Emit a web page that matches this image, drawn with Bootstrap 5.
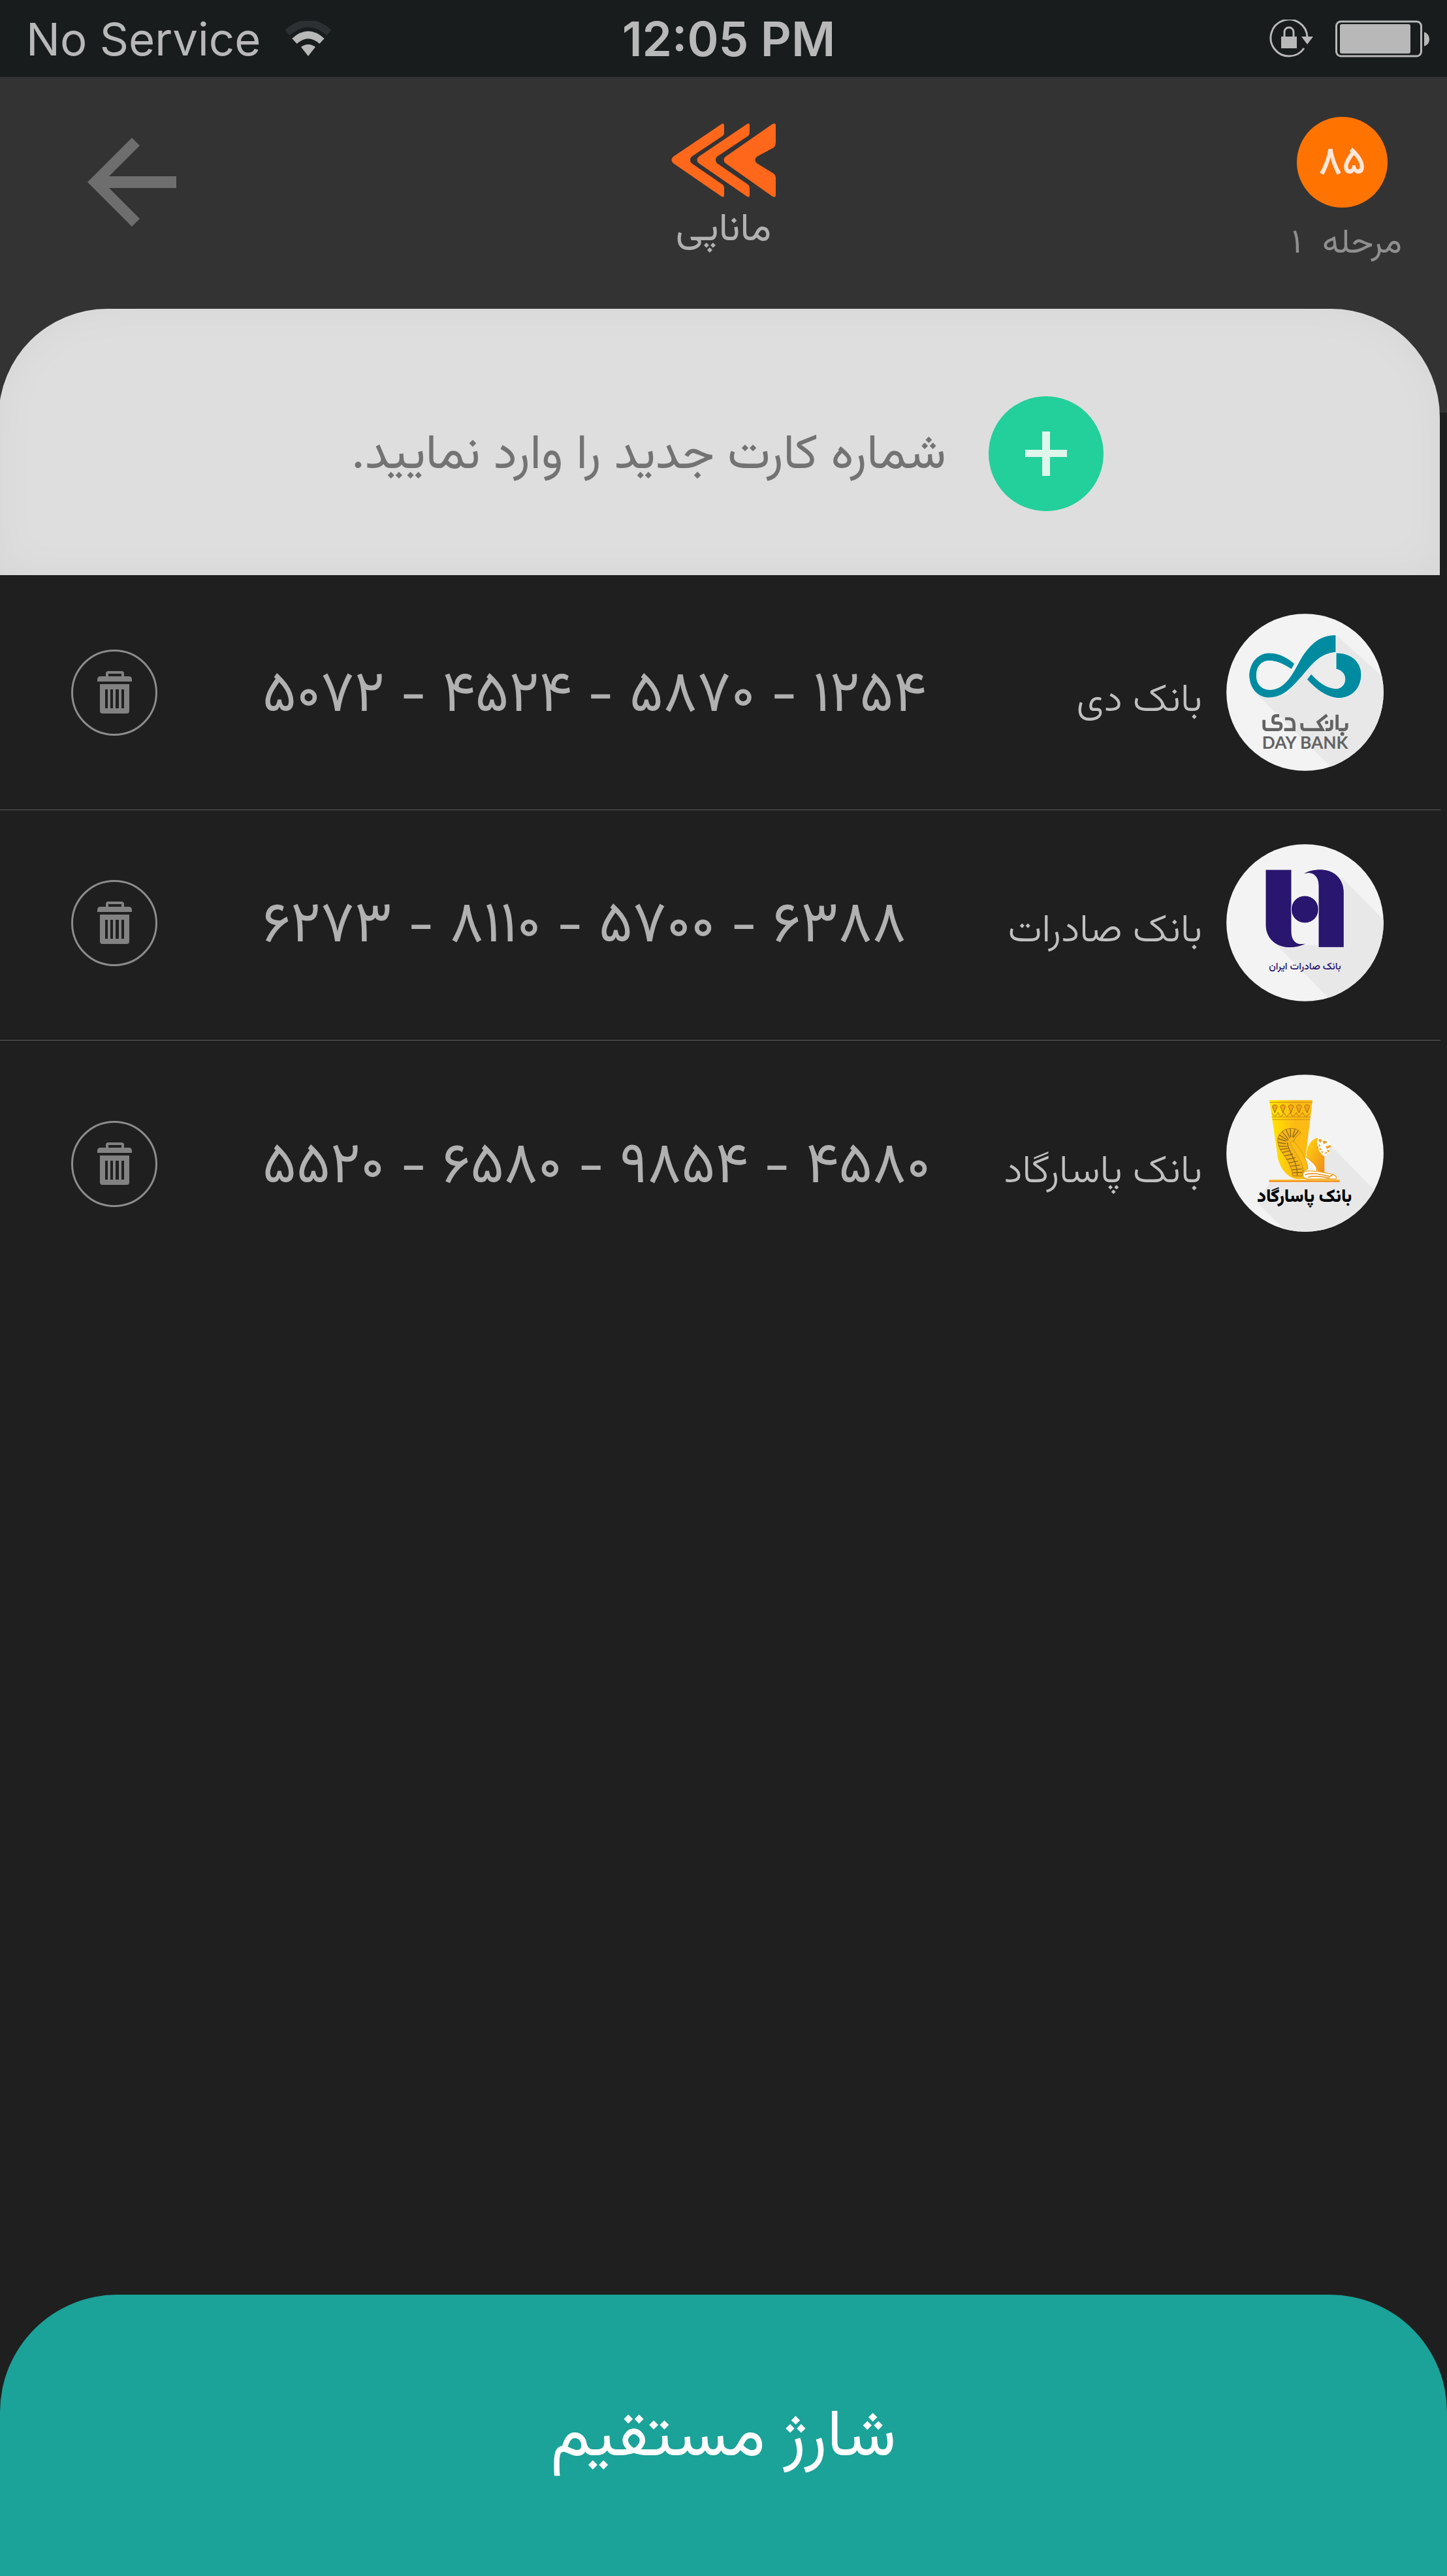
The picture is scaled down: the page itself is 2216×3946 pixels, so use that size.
<!DOCTYPE html>
<html lang="fa">
<head>
<meta charset="utf-8">
<meta name="viewport" content="width=device-width, initial-scale=1">
<title>ماناپی</title>
<link href="https://cdn.jsdelivr.net/npm/bootstrap@5.3.0/dist/css/bootstrap.min.css" rel="stylesheet">
<style>
  body { background: #1f1f1f; color: #b1b1b1; font-family: Vazirmatn, Vazir, "DejaVu Sans", sans-serif; }
  svg { display: block; flex: none; }
  .status-bar { background: #191c1d; height: 118px; padding: 2px 24px 0 40px; font: 400 69px/96px Inter, Roboto, sans-serif; color: #b8b8b8; }
  .status-left { gap: 38px; }
  .status-time { font-size: 73px; font-weight: 600; }
  .top-area { background: linear-gradient(#333 514px, #1f1f1f 514px); }
  .app-header { height: 355px; }
  .back-link { margin: 93px 0 0 134px; }
  .brand { padding-top: 71px; gap: 9px; font-size: 60px; line-height: 84px; color: #b1b1b1; }
  .step { padding-top: 61px; font-size: 52px; line-height: 80px; color: #8f8f8f; }
  .step-info { margin-right: 69px; gap: 17px; }
  .step-label { gap: 32px; }
  .step-count { width: 139px; height: 139px; margin-right: 14px; padding-top: 4px; background: #ff7300; color: #ffe6da; font-size: 60px; font-weight: 500; }
  .add-panel { height: 408px; margin: 0 11px 0 -2px; padding: 36px 515px 0 200px; gap: 65px; background: #dedede; border-radius: 166px 166px 0 0; box-shadow: inset 0 0 70px rgba(0,0,0,.035); }
  .card-input, .card-input:focus { background: transparent; border: 0; box-shadow: none; padding: 8px 0 0; font-size: 75px; line-height: 130px; color: #737373; }
  .card-input::placeholder { color: #737373; opacity: 1; }
  .add-btn { width: 176px; height: 176px; background: #23cf9a; }
  .bank-list { margin-right: 10px; padding-top: 7px; }
  .bank-item { padding: 52px 87px 59px 109px; border-bottom: 1px solid #5c5c5c; }
  .bank-item:last-child { border: 0; min-height: 384px; }
  .trash-btn { width: 132px; height: 132px; border: 3px solid #8c8c8c; background: transparent; }
  .bank-text { margin: 0 37px 0 161px; padding-top: 20px; line-height: 140px; }
  .card-number { font-size: 88px; font-weight: 400; color: #b1b1b1; }
  .bank-name { font-size: 60px; font-weight: 300; color: #c0c0c0; }
  .charge-btn { height: 431px; padding: 10px 0 0; background: #1ba299; color: #fff; font-size: 101px; line-height: 180px; border-radius: 180px 180px 0 0; }
</style>
</head>
<body class="d-flex flex-column min-vh-100">

<div class="status-bar row g-0 align-items-center">
  <div class="col status-left d-flex align-items-center">
    <span>No Service</span>
    <svg width="70" height="56" viewBox="0 0 70 56" fill="none" stroke-width="11">
      <path d="M3 18Q35-10 67 18" stroke="#2c3032"/>
      <path d="M14 31Q35 12 56 31" stroke="#b8b8b8"/>
      <path d="M35 54L24 40Q35 32 46 40Z" fill="#b8b8b8"/>
    </svg>
  </div>
  <div class="col-auto status-time">12:05 PM</div>
  <div class="col d-flex align-items-center justify-content-end">
    <svg width="68" height="60" viewBox="0 0 68 60" fill="none" stroke="#b8b8b8" stroke-width="3">
      <path d="M53 44A28 28 0 1 1 58 27"/>
      <path d="M49 26H67L58 38Z" fill="#b8b8b8" stroke="none"/>
      <path d="M18 26H42V44H18Z" fill="#b8b8b8" stroke="none"/>
      <path d="M23 27V19a7 7 0 0 1 14 0V27"/>
    </svg>
    <svg class="ms-4 me-0 ps-2" width="156" height="58" viewBox="0 0 146 58">
      <rect x="1.500" y="2" width="130" height="53" rx="7" fill="none" stroke="#b8b8b8" stroke-width="3"/>
      <rect x="7" y="6" width="108" height="45" rx="3" fill="#b8b8b8"/>
      <path d="M136 18q8 3 8 11t-8 11Z" fill="#b8b8b8"/>
    </svg>
  </div>
</div>

<div class="top-area">
  <header class="app-header row g-0">
    <div class="col">
      <a href="#" class="back-link d-inline-block" aria-label="بازگشت">
        <svg width="137" height="136" viewBox="0 0 137 136"><path d="M68 0L80 12L33 59H136V77H33L80 124L68 136L0 68Z" fill="#6e6e6e"/></svg>
      </a>
    </div>
    <div class="col brand d-flex flex-column align-items-center">
      <svg width="160" height="113" viewBox="0 0 160 113" fill="#ff671b">
        <path d="M77 1Q81-1 81 3V14Q81 17 79 19L31 51Q27 56 31 61L79 94Q81 96 81 99V110Q81 114 77 112L3 61Q-2 56 3 51Z"/>
        <path d="M116 1Q120-1 120 3V14Q120 17 118 19L70 51Q66 56 70 61L118 94Q120 96 120 99V110Q120 114 116 112L42 61Q37 56 42 51Z"/>
        <path d="M155 1Q160-1 160 3V30Q160 34 157 37L131 51Q126 56 131 61L157 77Q160 80 160 83V110Q160 114 155 112L83 61Q78 56 83 51Z"/>
      </svg>
      <div dir="rtl">ماناپی</div>
    </div>
    <div class="col step d-flex flex-column align-items-end">
      <div class="step-info d-flex flex-column align-items-center">
        <div class="step-count rounded-circle d-flex align-items-center justify-content-center">۸۵</div>
        <div dir="rtl" class="step-label d-flex"><span>مرحله</span><span>۱</span></div>
      </div>
    </div>
  </header>

  <form class="add-panel d-flex align-items-center">
    <input type="text" class="form-control card-input" dir="rtl" aria-label="شماره کارت" placeholder="شماره کارت جدید را وارد نمایید.">
    <button type="button" class="add-btn btn rounded-circle border-0 p-0 flex-shrink-0 d-flex align-items-center justify-content-center" aria-label="افزودن">
      <svg width="64" height="68" viewBox="0 0 64 68"><path d="M26 0H38V28H64V39H38V68H26V39H0V28H26Z" fill="#def6ec"/></svg>
    </button>
  </form>
</div>

<svg width="0" height="0" class="position-absolute" aria-hidden="true">
  <symbol id="trash" viewBox="0 0 53 65">
    <path fill="#828282" fill-rule="evenodd" d="M13 8V4Q13 0 17 0H37Q41 0 41 4V8H48Q53 8 53 13V16H0V13Q0 8 5 8ZM17 8H37V4H17ZM4 20H49V61Q49 65 45 65H8Q4 65 4 61ZM12 28V57H16V28ZM20 28V57H24V28ZM28 28V57H33V28ZM37 28V57H41V28Z"/>
  </symbol>
</svg>

<ul class="bank-list list-unstyled mb-0">
  <li class="bank-item d-flex align-items-center">
    <button type="button" class="trash-btn btn rounded-circle p-0 flex-shrink-0 d-flex align-items-center justify-content-center" aria-label="حذف"><svg width="53" height="65"><use href="#trash"/></svg></button>
    <div class="bank-text flex-grow-1 d-flex justify-content-between align-items-baseline">
      <span class="card-number">۵۰۷۲ - ۴۵۲۴ - ۵۸۷۰ - ۱۲۵۴</span>
      <span class="bank-name" dir="rtl">بانک دی</span>
    </div>
    <svg class="align-self-start" width="241" height="241" viewBox="24 30 723 723">
      <clipPath id="dayClip"><circle cx="385.500" cy="391.500" r="361"/></clipPath>
      <circle cx="385.500" cy="391.500" r="361" fill="#f3f3f3"/>
      <path clip-path="url(#dayClip)" fill="#e8e8e8" d="M528 128L750 326V760H530L160 396L300 400L400 270L528 200Z"/>
      <path d="M413 320C450 358 480 390 530 396C585 400 570 290 528 286V212C500 212 470 225 440 250Z" fill="#ececec"/>
      <g fill="#008ba1" stroke="#fafafa" stroke-width="3">
        <path d="M338 260C300 228 265 210 218 210C165 212 128 262 128 314C130 375 170 417 220 417C285 415 320 375 370 320C415 268 450 214 528 208V128C455 126 415 168 380 215C340 272 310 378 224 379C182 378 163 350 163 314C163 270 187 248 220 247C258 247 290 265 324 286Z"/>
        <path d="M528 210C595 208 645 250 645 312C643 375 600 418 540 419C485 415 440 382 394 332L414 307C445 340 480 372 530 374C558 372 570 350 569 328C568 305 550 288 528 286Z"/>
      </g>
      <g fill="none" stroke="#636363" stroke-width="14">
        <path d="M197 518V548Q197 563 212 563H262Q276 562 276 545Q276 533 262 533H248Q238 533 238 519Q238 499 252 499H267M294 513H314Q335 515 335 540V563H290M371 533V548Q371 563 386 563H466L446 528L487 496M508 518V550Q508 563 494 563H480M533 494V563M577 533V548Q577 563 562 563H540"/>
      </g>
      <circle cx="485" cy="530" r="8" fill="#636363"/><circle cx="557" cy="583" r="9" fill="#636363"/>
      <text x="386" y="650" text-anchor="middle" font-family="Lato, sans-serif" font-weight="700" font-size="79" fill="#636363">DAY BANK</text>
    </svg>
  </li>

  <li class="bank-item d-flex align-items-center">
    <button type="button" class="trash-btn btn rounded-circle p-0 flex-shrink-0 d-flex align-items-center justify-content-center" aria-label="حذف"><svg width="53" height="65"><use href="#trash"/></svg></button>
    <div class="bank-text flex-grow-1 d-flex justify-content-between align-items-baseline">
      <span class="card-number">۶۲۷۳ - ۸۱۱۰ - ۵۷۰۰ - ۶۳۸۸</span>
      <span class="bank-name" dir="rtl">بانک صادرات</span>
    </div>
    <svg class="align-self-start" width="241" height="241" viewBox="0 0 723 723">
      <clipPath id="sadClip"><circle cx="361.500" cy="361.500" r="361"/></clipPath>
      <circle cx="361.500" cy="361.500" r="361" fill="#f3f3f3"/>
      <path clip-path="url(#sadClip)" fill="#e8e8e8" d="M530 152L730 356V730H492L232 464H430L530 400Z"/>
      <g fill="#29166f" stroke="#fafafa" stroke-width="3">
        <path d="M180 117H300V400C300 440 318 458 342 458L370 456C345 470 320 476 290 476C225 476 180 430 180 372Z"/>
        <path d="M541 475H423V192C423 154 405 134 378 134L352 137C375 122 402 116 432 116C500 116 541 164 541 222Z"/>
        <circle cx="361" cy="300" r="63"/>
      </g>
      <text x="361" y="575" text-anchor="middle" direction="rtl" font-size="46" font-weight="500" fill="#29166f">بانک صادرات ایران</text>
    </svg>
  </li>

  <li class="bank-item d-flex align-items-center">
    <button type="button" class="trash-btn btn rounded-circle p-0 flex-shrink-0 d-flex align-items-center justify-content-center" aria-label="حذف"><svg width="53" height="65"><use href="#trash"/></svg></button>
    <div class="bank-text flex-grow-1 d-flex justify-content-between align-items-baseline">
      <span class="card-number">۵۵۲۰ - ۶۵۸۰ - ۹۸۵۴ - ۴۵۸۰</span>
      <span class="bank-name" dir="rtl">بانک پاسارگاد</span>
    </div>
    <svg class="align-self-start" width="241" height="241" viewBox="24 18 723 723">
      <clipPath id="pasClip"><circle cx="385.500" cy="379.500" r="361"/></clipPath>
      <linearGradient id="gold"><stop offset="0" stop-color="#ffea00"/><stop offset=".6" stop-color="#fdb913"/><stop offset="1" stop-color="#fbbc14"/></linearGradient>
      <linearGradient id="mane" x2="1" y2="1"><stop offset="0" stop-color="#ffd80c"/><stop offset="1" stop-color="#f08a1d"/></linearGradient>
      <circle cx="385.500" cy="379.500" r="361" fill="#f3f3f3"/>
      <path clip-path="url(#pasClip)" fill="#e8e8e8" d="M505 345L730 575V750H310L165 605L222 516H475V345Z"/>
      <path d="M222 136H420L390 385C375 440 385 480 400 498H345C300 490 262 440 258 380Z" fill="url(#gold)"/>
      <path d="M223 146H419M233 213H411M236 225H409" stroke="#c98a14" stroke-width="3"/>
      <path d="M234 196q14 26 28-4q10 36 28 0q10 36 28 0q10 36 28 0q10 36 28 0q12 34 34 4" fill="none" stroke="#b8791a" stroke-width="3"/>
      <g fill="#f4a51b" stroke="#a86c12" stroke-width="3">
        <path d="M247 194l-12-30q12-14 24 0Z"/><path d="M284 194l-12-30q12-14 24 0Z"/><path d="M321 194l-12-30q12-14 24 0Z"/><path d="M358 194l-12-30q12-14 24 0Z"/><path d="M395 194l-12-30q12-14 24 0Z"/>
      </g>
      <path d="M366 286C350 262 310 258 280 280C252 305 258 340 276 370C305 410 325 440 330 484H372C385 440 365 400 340 365C325 340 330 310 366 286Z" fill="#f6b51a" stroke="#b07a14" stroke-width="3"/>
      <g fill="none" stroke="#8f6b12" stroke-width="4">
        <path d="M262 330l36 6M264 347l40 2M272 362l38-4M282 376l38-8M292 392l38-8M302 408l40-8M311 424l42-8M318 440l44-6M325 456l46-4M329 470l44-2M260 312l40 12M266 295l42 26M280 280l30 36M298 270l18 40M318 266l2 40M340 268l-12 38M355 276l-24 32"/>
        <path d="M304 330C310 380 350 410 350 482"/>
      </g>
      <path d="M318 330Q330 320 342 334C375 375 400 420 398 452L378 462C375 410 335 375 318 330Z" fill="#fdbd16" stroke="#c3890f" stroke-width="2"/>
      <path d="M444 308C405 318 392 360 392 395C420 425 440 430 445 468L475 472V395L450 370Z" fill="url(#mane)"/>
      <path d="M445 310q22-6 26 10q24-8 26 12l12 12l-10 14v18l-14 10q-18 10-24-6q-14-10-12-24q-12-16-4-46Z" fill="#fff"/>
      <path d="M446 318q10-10 18 2l-8 12ZM466 326q16-10 22 4l-16 8ZM480 348l22-6l4 8l-20 10ZM450 336l8 10l-10 4ZM452 354l10 6l-8 8ZM458 370l12 2l-6 8ZM474 380l10-8l4 10ZM486 364l14 2l-8 12Z" fill="#eda027"/>
      <path d="M390 395C425 425 445 440 438 462L510 476Q535 485 528 498H395Q368 490 378 470Q385 456 436 464" fill="#fff" stroke="#f0a61c" stroke-width="4"/>
      <path d="M386 480Q400 470 440 474L500 486L515 478M400 490Q430 480 500 494" fill="none" stroke="#e8951c" stroke-width="5"/>
      <path d="M221 502H545V512H221Z" fill="#f08a24"/><path d="M221 502H545V506H221Z" fill="#fdc52c"/>
      <text x="383" y="604" text-anchor="middle" direction="rtl" font-size="82" font-weight="900" fill="#000">بانک پاسارگاد</text>
    </svg>
  </li>
</ul>

<button type="button" class="charge-btn btn w-100 border-0 mt-auto">شارژ مستقیم</button>

<script src="https://cdn.jsdelivr.net/npm/bootstrap@5.3.0/dist/js/bootstrap.bundle.min.js"></script>
</body>
</html>
